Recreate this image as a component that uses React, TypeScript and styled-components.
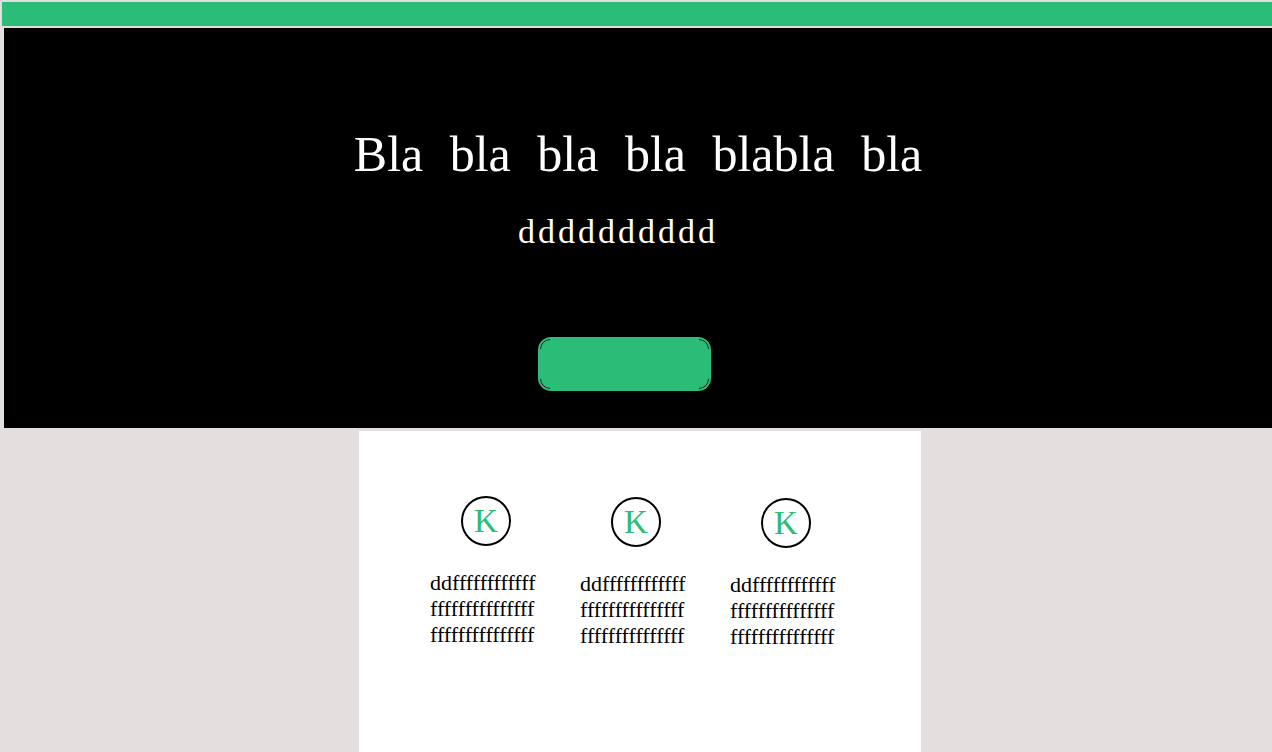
import styled, { createGlobalStyle } from 'styled-components';

const GlobalStyle = createGlobalStyle`
  body {
    margin: 0;
    background: #e2dfde;
    font-family: "Liberation Serif", serif;
  }
`;

const Page = styled.div`
  display: flex;
  flex-direction: column;
  min-height: 752px;
  padding: 2px 0 0 2px;
  box-sizing: border-box;
`;

const TopBar = styled.div`
  height: 24px;
  background: #2bbc77;
`;

const Hero = styled.section`
  margin: 2px 0 0 2px;
  height: 400px;
  background: #000;
  color: #fff;
  display: flex;
  flex-direction: column;
  align-items: center;
  padding-top: 96px;
  box-sizing: border-box;
`;

const Title = styled.h1`
  margin: 0;
  font-size: 50px;
  font-weight: 400;
  word-spacing: 14px;
  line-height: 60px;
`;

const Subtitle = styled.p`
  margin: 28px 40px 0 0;
  font-size: 34px;
  line-height: 40px;
  letter-spacing: 3px;
`;

const ButtonFrame = styled.div`
  margin: 85px 28px 0 0;
  width: 173px;
  height: 54px;
  border-radius: 13px;
  background: #2bbc77;
  padding: 2px;
  box-sizing: border-box;
`;

// the dark ring only shows on the rounded corners
const Button = styled.button`
  position: relative;
  width: 100%;
  height: 100%;
  border: none;
  padding: 0;
  background: transparent;

  &::before {
    content: '';
    position: absolute;
    inset: 0;
    border: 1px solid #0b0b0b;
    border-radius: 10px;
    -webkit-mask:
      linear-gradient(#000 0 0) top left / 10px 10px no-repeat,
      linear-gradient(#000 0 0) top right / 10px 10px no-repeat,
      linear-gradient(#000 0 0) bottom left / 10px 10px no-repeat,
      linear-gradient(#000 0 0) bottom right / 10px 10px no-repeat;
    mask:
      linear-gradient(#000 0 0) top left / 10px 10px no-repeat,
      linear-gradient(#000 0 0) top right / 10px 10px no-repeat,
      linear-gradient(#000 0 0) bottom left / 10px 10px no-repeat,
      linear-gradient(#000 0 0) bottom right / 10px 10px no-repeat;
  }
`;

const CardArea = styled.div`
  flex: 1;
  display: flex;
  justify-content: center;
  padding-left: 6px;
`;

const Card = styled.section`
  margin-top: 3px;
  width: 562px;
  background: #fff;
  display: flex;
  gap: 38px;
  padding: 65px 0 0 71px;
  box-sizing: border-box;
`;

const Feature = styled.div<{ $shift: number }>`
  width: 112px;
  display: flex;
  flex-direction: column;
  margin-top: ${(p) => p.$shift}px;
`;

const Badge = styled.div`
  align-self: center;
  width: 50px;
  height: 50px;
  border: 2px solid #000;
  border-radius: 50%;
  box-sizing: border-box;
  display: flex;
  align-items: center;
  justify-content: center;
  color: #2bbc77;
  font-size: 33px;
`;

const Text = styled.p`
  margin: 24px 0 0;
  width: 108px;
  font-size: 22px;
  line-height: 26px;
  word-break: break-all;
  color: #000;
`;

const items = [0, 1, 2];
const filler = 'dd' + 'f'.repeat(42);

export default function App() {
  return (
    <>
      <GlobalStyle />
      <Page>
        <TopBar />
        <Hero>
          <Title>Bla bla bla bla blabla bla</Title>
          <Subtitle>dddddddddd</Subtitle>
          <ButtonFrame>
            <Button />
          </ButtonFrame>
        </Hero>
        <CardArea>
          <Card>
            {items.map((i) => (
              <Feature key={i} $shift={i}>
                <Badge>K</Badge>
                <Text>{filler}</Text>
              </Feature>
            ))}
          </Card>
        </CardArea>
      </Page>
    </>
  );
}
